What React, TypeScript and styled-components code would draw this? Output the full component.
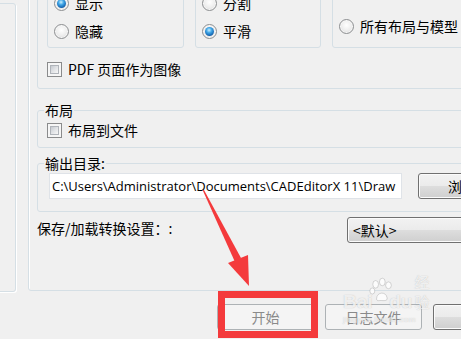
import React from "react";
import styled, { createGlobalStyle, css } from "styled-components";

const Global = createGlobalStyle`
  html, body { margin: 0; padding: 0; background: #f0f0f0; }
  body {
    font-family: "Noto Sans CJK SC", "Noto Sans", sans-serif;
    font-size: 14px;
    color: #000;
  }
`;

const Screen = styled.div`
  position: relative;
  width: 461px;
  height: 339px;
  overflow: hidden;
  background: #f0f0f0;
  display: flex;
  flex-direction: column;
`;

const TopArea = styled.div`
  display: flex;
  height: 292px;
  flex: none;
  gap: 12px;
`;

const SidePanel = styled.div`
  flex: none;
  width: 20px;
  margin-left: -4px;
  margin-top: 3px;
  box-sizing: border-box;
  border: 1px solid #d5dfe5;
  border-radius: 3px;
  box-shadow: 1px 1px 0 #fff;
`;

const MainGroup = styled.div`
  flex: none;
  width: 500px;
  margin-top: -60px;
  margin-bottom: 1px;
  box-sizing: border-box;
  border: 1px solid #d5dfe5;
  border-radius: 3px;
  box-shadow: inset 1px 1px 0 #fff;
  padding: 0 0 0 8px;
  display: flex;
  flex-direction: column;
`;

const OptionsGroup = styled.div`
  margin-top: 9px;
  border: 1px solid #d5dfe5;
  border-radius: 3px;
  padding: 0 0 9px 9px;
  display: flex;
  flex-direction: column;
`;

const SubGroupRow = styled.div`
  display: flex;
  gap: 11px;
  margin-top: 9px;
  align-items: stretch;
`;

const SubGroup = styled.div<{ $w: number; $bottom?: boolean }>`
  width: ${(p) => p.$w}px;
  flex: none;
  box-sizing: border-box;
  height: 88px;
  border: 1px solid #d5dfe5;
  border-radius: 3px;
  padding: 32px 0 6px 6px;
  display: flex;
  flex-direction: column;
  gap: 8px;
  ${(p) =>
    p.$bottom &&
    css`
      justify-content: flex-end;
      padding-bottom: 11px;
    `}
`;

const OptionRow = styled.label`
  display: flex;
  align-items: center;
  height: 20px;
  line-height: 20px;
  white-space: nowrap;
  gap: 6px;
`;

const Radio = styled.span<{ $checked?: boolean }>`
  position: relative;
  flex: none;
  width: 15px;
  height: 15px;
  box-sizing: border-box;
  border-radius: 50%;
  border: 1px solid #8d8f91;
  background: radial-gradient(circle at 50% 40%, #ffffff 0%, #ececec 55%, #cfd0d2 100%);
  box-shadow: inset 0 0 0 1px #f7f7f7;
  ${(p) =>
    p.$checked &&
    css`
      &::after {
        content: "";
        position: absolute;
        left: 2px;
        top: 2px;
        width: 9px;
        height: 9px;
        border-radius: 50%;
        background: radial-gradient(circle at 45% 35%, #c9efff 0%, #3fa5e6 35%, #1565b0 70%, #0b3f78 100%);
      }
    `}
`;

const Check = styled.span`
  position: relative;
  flex: none;
  width: 15px;
  height: 15px;
  box-sizing: border-box;
  border: 1px solid #8a8b8c;
  background: #f6f6f6;
  &::after {
    content: "";
    position: absolute;
    left: 2px;
    top: 2px;
    right: 2px;
    bottom: 2px;
    box-sizing: border-box;
    border: 1px solid #b0b4ba;
    background: linear-gradient(135deg, #c6cad0 0%, #e1e3e6 50%, #f7f7f7 100%);
  }
`;

const CheckRow = styled(OptionRow)`
  margin-top: 11px;
`;

const Field = styled.fieldset<{ $top: number; $bottom: number }>`
  margin: ${(p) => p.$top}px 0 0 0;
  padding: 0 0 ${(p) => p.$bottom}px 0;
  border: 1px solid #d5dfe5;
  border-radius: 3px;
  min-width: 0;
`;

const Legend = styled.legend`
  margin-left: 6px;
  padding: 0 1px;
  line-height: 20px;
  height: 20px;
  font-size: 14px;
`;

const FieldBody = styled.div<{ $pad: number }>`
  display: flex;
  align-items: center;
  padding-left: ${(p) => p.$pad}px;
  gap: 16px;
`;

const PathInput = styled.input`
  width: 353px;
  height: 26px;
  box-sizing: border-box;
  border: 1px solid #dfe3e8;
  background: #fff;
  padding: 0 0 0 2px;
  margin: 0;
  font-family: "Open Sans", "Noto Sans", sans-serif;
  font-size: 13px;
  color: #000;
  outline: none;
`;

const WinButton = styled.button<{ $w?: number }>`
  flex: none;
  width: ${(p) => p.$w ?? 97}px;
  height: 26px;
  box-sizing: border-box;
  margin: 0;
  padding: 0;
  border: 1px solid #707070;
  border-radius: 3px;
  background: linear-gradient(#f2f2f2 0%, #ebebeb 50%, #dddddd 52%, #cfcfcf 100%);
  box-shadow: inset 0 0 0 1px #fbfbfb;
  font-family: "Noto Sans CJK SC", sans-serif;
  font-size: 14px;
  color: #000;
  &:disabled {
    border-color: #adb2b5;
    background: #f4f4f4;
    box-shadow: none;
    color: #8a8a8a;
  }
`;

const SaveRow = styled.div`
  display: flex;
  align-items: flex-start;
  margin-top: 5px;
  height: 26px;
`;

const SaveLabel = styled.span`
  flex: 0 0 310px;
  line-height: 20px;
  padding-top: 1px;
  white-space: nowrap;
`;

const Combo = styled.div`
  flex: none;
  width: 140px;
  height: 26px;
  box-sizing: border-box;
  border: 1px solid #707070;
  border-radius: 3px;
  background: linear-gradient(#f2f2f2 0%, #ebebeb 50%, #dddddd 52%, #cfcfcf 100%);
  box-shadow: inset 0 0 0 1px #fbfbfb;
  padding-left: 5px;
  line-height: 24px;
  font-size: 14px;
`;

const ButtonBar = styled.div`
  display: flex;
  gap: 11px;
  padding: 12px 0 0 217px;
`;

const Highlight = styled.div`
  position: absolute;
  left: 218px;
  top: 291px;
  width: 100px;
  height: 47px;
  box-sizing: border-box;
  border: 7px solid #f43a3c;
  pointer-events: none;
`;

const Overlay = styled.svg`
  position: absolute;
  left: 0;
  top: 0;
  pointer-events: none;
`;

const Watermark = styled.div`
  position: absolute;
  left: 343px;
  top: 277px;
  width: 100px;
  pointer-events: none;
  color: rgba(255, 255, 255, 0.75);
  text-shadow: 0 0 1px rgba(140, 140, 140, 0.55);
  font-family: "Liberation Sans", sans-serif;
`;

const MarkLine = styled.div`
  display: flex;
  align-items: flex-end;
  height: 35px;
  font-size: 19px;
  font-weight: bold;
  line-height: 20px;
`;

const MarkCjk = styled.span`
  font-family: "Noto Sans CJK SC", sans-serif;
  font-size: 15px;
  font-weight: normal;
  margin-left: 2px;
`;

const MarkSub = styled.div`
  font-size: 8px;
  line-height: 10px;
  letter-spacing: 0.5px;
  margin-top: 3px;
`;

const Paw: React.FC = () => (
  <svg width="26" height="28" viewBox="0 0 26 28" style={{ marginLeft: -4, marginRight: -4, alignSelf: "flex-start" }}>
    <g fill="rgba(255,255,255,0.8)" stroke="rgba(150,150,150,0.5)" strokeWidth="0.8">
      <ellipse cx="7" cy="7" rx="3" ry="4" />
      <ellipse cx="14" cy="4.5" rx="3" ry="4" />
      <ellipse cx="20.5" cy="8" rx="3" ry="3.6" />
      <ellipse cx="3.5" cy="14" rx="2.6" ry="3.2" />
      <path d="M8 22 C8 15 18 14 19 21 C20 25 15 24 13 24 C10 24 8 25 8 22 Z" />
    </g>
  </svg>
);

const PATH = "C:\\Users\\Administrator\\Documents\\CADEditorX 11\\Draw";

export default function App() {
  return (
    <Screen>
      <Global />
      <TopArea>
        <SidePanel />
        <MainGroup>
          <OptionsGroup>
            <SubGroupRow>
              <SubGroup $w={137}>
                <OptionRow>
                  <Radio $checked />
                  显示
                </OptionRow>
                <OptionRow>
                  <Radio />
                  隐藏
                </OptionRow>
              </SubGroup>
              <SubGroup $w={126}>
                <OptionRow>
                  <Radio />
                  分割
                </OptionRow>
                <OptionRow>
                  <Radio $checked />
                  平滑
                </OptionRow>
              </SubGroup>
              <SubGroup $w={150} $bottom>
                <OptionRow>
                  <Radio />
                  所有布局与模型
                </OptionRow>
              </SubGroup>
            </SubGroupRow>
            <CheckRow>
              <Check />
              PDF 页面作为图像
            </CheckRow>
          </OptionsGroup>

          <Field $top={11} $bottom={7}>
            <Legend>布局</Legend>
            <FieldBody $pad={9}>
              <OptionRow>
                <Check />
                布局到文件
              </OptionRow>
            </FieldBody>
          </Field>

          <Field $top={5} $bottom={12}>
            <Legend>输出目录:</Legend>
            <FieldBody $pad={11}>
              <PathInput readOnly value={PATH} />
              <WinButton $w={88}>浏览</WinButton>
            </FieldBody>
          </Field>

          <SaveRow>
            <SaveLabel>保存/加载转换设置：:</SaveLabel>
            <Combo>&lt;默认&gt;</Combo>
          </SaveRow>
        </MainGroup>
      </TopArea>

      <ButtonBar>
        <WinButton disabled>开始</WinButton>
        <WinButton disabled>日志文件</WinButton>
        <WinButton>关闭</WinButton>
      </ButtonBar>

      <Overlay width="461" height="339" viewBox="0 0 461 339">
        <polygon fill="#f43a3c" points="202.6,190 204,190 241,258 235,262" />
        <polygon fill="#f43a3c" points="228,263 248,255 249,286" />
      </Overlay>

      <Highlight />

      <Watermark>
        <MarkLine>
          Bai
          <Paw />
          du
          <MarkCjk>经验</MarkCjk>
        </MarkLine>
        <MarkSub>jingyan.baidu.com</MarkSub>
      </Watermark>
    </Screen>
  );
}
